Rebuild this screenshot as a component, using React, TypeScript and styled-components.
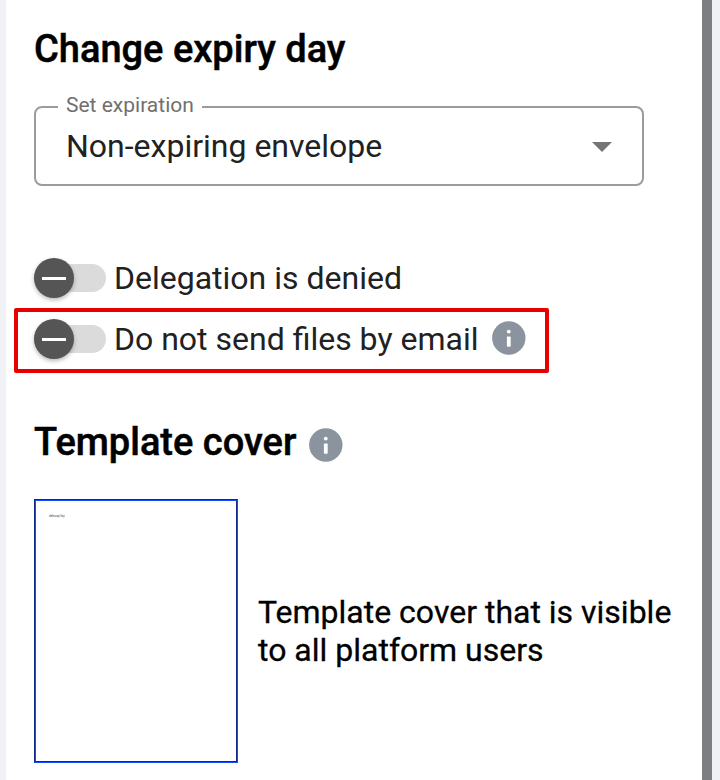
import React from "react";
import styled, { createGlobalStyle } from "styled-components";

const Global = createGlobalStyle`
  * { box-sizing: border-box; }
  body { margin: 0; overflow: hidden; background: #fff; font-family: Roboto, sans-serif; }
`;
const Page = styled.div`
  display: flex;
  width: 720px;
  height: 780px;
  background: #f0f1f4;
  overflow: hidden;
`;
const Panel = styled.main`
  margin-left: 6px;
  width: 696px;
  background: #fff;
  padding: 26px 0 0 28px;
`;
const Scrollbar = styled.div`
  width: 10px;
  background: #7d7e80;
`;
const Heading = styled.h2`
  margin: 0;
  font-size: 38px;
  line-height: 46px;
  font-weight: 500;
  color: #000;
  white-space: nowrap;
  -webkit-text-stroke: 0.5px #000;
`;
const Select = styled.fieldset`
  display: flex;
  align-items: center;
  justify-content: space-between;
  width: 610px;
  height: 93px;
  margin: 21px 0 0;
  padding: 0 30px 13px 30px;
  border: 2px solid #9c9c9c;
  border-radius: 8px;
`;
const Legend = styled.legend`
  height: 28px;
  padding: 0 8px;
  margin-left: -8px;
  font-size: 21px;
  line-height: 24px;
  color: #707070;
`;
const Value = styled.span`
  margin-top: -4px;
  margin-bottom: -4px;
  font-size: 32px;
  line-height: 40px;
  color: #212121;
`;
const Arrow = styled.svg`
  margin-top: 2px;
`;
const Switches = styled.div`
  margin-top: 62px;
`;
const SwitchRow = styled.label<{ $marked?: boolean }>`
  display: flex;
  align-items: center;
  width: 535px;
  height: ${(p) => (p.$marked ? "65px" : "60px")};
  margin-left: -20px;
  padding: ${(p) => (p.$marked ? "0 0 3px 16px" : "0 0 0 20px")};
  border: ${(p) => (p.$marked ? "4px solid #e80000" : "0")};
  border-radius: 2px;
`;
const Track = styled.span`
  display: flex;
  align-items: center;
  width: 72px;
  height: 28px;
  border-radius: 14px;
  background: #dbdbdb;
`;
const Thumb = styled.span`
  display: grid;
  place-items: center;
  width: 40px;
  height: 40px;
  border-radius: 50%;
  background: #555;
  box-shadow: 0 2px 4px rgba(0, 0, 0, 0.28);
  &::after { content: ""; width: 24px; height: 3px; background: #fff; }
`;
const SwitchText = styled.span`
  margin: 0 14px 0 8px;
  font-size: 32px;
  line-height: 40px;
  color: #212121;
`;
const CoverHeading = styled.div`
  display: flex;
  gap: 13px;
  margin-top: 46px;
`;
const Cover = styled.div`
  display: flex;
  align-items: center;
  margin-top: 34px;
`;
const Sheet = styled.div`
  width: 204px;
  height: 264px;
  padding: 12px 13px;
  border: 2px solid;
  border-style: groove;
  border-color: #1443e0;
  font-size: 3px;
  line-height: 6px;
  color: #444;
`;
const Caption = styled.p`
  margin: 0 0 0 20px;
  font-size: 32px;
  line-height: 38px;
  color: #000;
  -webkit-text-stroke: 0.3px #000;
`;
const InfoSvg = styled.svg<{ $drop: number }>`
  flex: none;
  margin-top: ${(p) => p.$drop}px;
`;
const Info = ({ drop }: { drop: number }) => (
  <InfoSvg $drop={drop} width="34" height="34" viewBox="0 0 34 34">
    <circle cx="16.8" cy="17" r="16.7" fill="#8b949e" />
    <circle cx="16.8" cy="10.6" r="1.9" fill="#fff" />
    <rect x="14.9" y="15.5" width="3.8" height="10.3" rx="0.8" fill="#fff" />
  </InfoSvg>
);

export default function App() {
  return (
    <Page>
      <Global />
      <Panel>
        <Heading>Change expiry day</Heading>
        <Select>
          <Legend>Set expiration</Legend>
          <Value>Non-expiring envelope</Value>
          <Arrow width="20" height="10" viewBox="0 0 20 10"><path d="M0 0h20L10 10z" fill="#757575" /></Arrow>
        </Select>
        <Switches>
          <SwitchRow><Track><Thumb /></Track><SwitchText>Delegation is denied</SwitchText></SwitchRow>
          <SwitchRow $marked><Track><Thumb /></Track><SwitchText>Do not send files by email</SwitchText><Info drop={-2} /></SwitchRow>
        </Switches>
        <CoverHeading><Heading>Template cover</Heading><Info drop={9} /></CoverHeading>
        <Cover>
          <Sheet>delovoy/fay</Sheet>
          <Caption>Template cover that is visible<br />to all platform users</Caption>
        </Cover>
      </Panel>
      <Scrollbar />
    </Page>
  );
}
